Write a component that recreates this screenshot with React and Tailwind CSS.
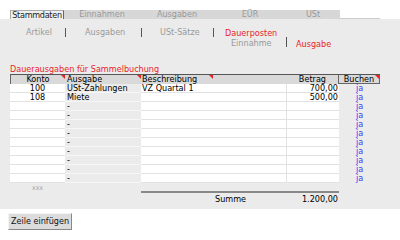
const rows = [
  { konto: "100", ausgabe: "USt-Zahlungen", beschr: "VZ Quartal 1", betrag: "700,00" },
  { konto: "108", ausgabe: "Miete", beschr: "", betrag: "500,00" },
  ...Array.from({ length: 9 }, () => ({ konto: "", ausgabe: "-", beschr: "", betrag: "" })),
];

const tabs = [
  { label: "Einnahmen", w: "w-[76px]" },
  { label: "Ausgaben", w: "w-[74px]" },
  { label: "EÜR", w: "w-[72px]" },
  { label: "USt", w: "w-[54px]" },
];

function Mark() {
  return (
    <span className="absolute top-0 right-0 w-0 h-0 border-t-[4px] border-t-[#e8232a] border-l-[4px] border-l-transparent" />
  );
}

function Sep({ className = "" }) {
  return <span className={`shrink-0 w-px h-[9px] bg-[#555] ${className}`} />;
}

export default function App() {
  return (
    <div
      className="w-[400px] h-[240px] bg-white text-[9px] leading-[9px] text-black overflow-hidden"
      style={{ fontFamily: '"DejaVu Sans Condensed", "DejaVu Sans", sans-serif' }}
    >
      <div className="h-[10px]" />

      {/* tabs */}
      <div className="flex h-[9px] pl-[10px]">
        <div className="shrink-0 w-[54px] bg-[#efefef] border-t border-l border-[#aaa] border-r-[#666] border-r text-[#222] text-center leading-[8px] tracking-[-0.3px]">
          Stammdaten
        </div>
        {tabs.map((t) => (
          <div key={t.label} className={`shrink-0 ${t.w} bg-[#d7d7d7] text-[#999] text-center leading-[9px]`}>
            {t.label}
          </div>
        ))}
        <div className="shrink-0 w-[40px] border-b border-[#ccc]" />
      </div>

      <div className="h-[190px] bg-[#ebebeb] pt-[9px]">
        {/* sub navigation */}
        <div className="flex items-start pl-[26px] text-[#999] h-[19px]">
          <div className="shrink-0 w-[39px]">Artikel</div>
          <Sep />
          <div className="shrink-0 ml-[19px] w-[56px]">Ausgaben</div>
          <Sep />
          <div className="shrink-0 ml-[18px] w-[53px]">USt-Sätze</div>
          <Sep />
          <div className="ml-[11px] flex flex-col">
            <div className="text-[#e8232a] h-[9px] pt-[1px]">Dauerposten</div>
            <div className="flex items-start">
              <div className="shrink-0 ml-[6px] w-[55px] pt-[2px]">Einnahme</div>
              <Sep className="h-[10px]" />
              <div className="ml-[9px] text-[#e8232a] pt-[3px]">Ausgabe</div>
            </div>
          </div>
        </div>

        {/* title */}
        <div className="mt-[18px] pl-[10px] text-[#e8232a] h-[9px]">Dauerausgaben für Sammelbuchung</div>

        {/* table */}
        <div className="ml-[10px] w-[370px]">
          <div className="flex h-[10px] border-t border-[#555] bg-[#d9d9d9] leading-[9px]">
            <div className="relative shrink-0 w-[55px] border-l border-[#666] text-center">
              Konto
              <Mark />
            </div>
            <div className="relative shrink-0 w-[76px] pl-[2px]">
              Ausgabe
              <Mark />
            </div>
            <div className="relative shrink-0 w-[145px] pl-[1px]">
              Beschreibung
              <span className="absolute top-0 left-[68px] w-0 h-0 border-t-[4px] border-t-[#e8232a] border-l-[4px] border-l-transparent" />
            </div>
            <div className="shrink-0 w-[53px] text-right pr-[12px] border-r border-[#666]">Betrag</div>
            <div className="relative shrink-0 w-[41px] text-center border-r border-b border-[#666]">
              Buchen
              <Mark />
            </div>
          </div>

          {rows.map((r, i) => (
            <div key={i} className="flex h-[9px] leading-[8px]">
              <div className="shrink-0 w-[55px] bg-white border-b border-[#e2e2e2] text-center">{r.konto}</div>
              <div className="shrink-0 w-[76px] border-b border-[#f6f6f6] pl-[2px]">{r.ausgabe}</div>
              <div className="shrink-0 w-[145px] bg-white border-b border-[#e2e2e2] pl-[1px]">{r.beschr}</div>
              <div className="shrink-0 w-[53px] bg-white border-b border-l border-[#e2e2e2] text-right pr-[1px]">{r.betrag}</div>
              <div className="shrink-0 w-[41px] pl-[17px] text-[#3b3bf0]">ja</div>
            </div>
          ))}

          <div className="flex h-[8px] pt-[2px]">
            <div className="shrink-0 w-[55px] text-center text-[#aaa] text-[7px] leading-[7px]">xxx</div>
          </div>
          <div className="flex">
            <div className="shrink-0 w-[131px]" />
            <div className="shrink-0 w-[198px] border-t-2 border-[#888] flex pt-[2px]">
              <div className="pl-[74px]">Summe</div>
              <div className="ml-auto pr-[1px]">1.200,00</div>
            </div>
          </div>
        </div>
      </div>

      <div className="pl-[8px] pt-[4px]">
        <button className="h-[17px] w-[64px] bg-[#dcdcdc] border border-t-[#f4f4f4] border-l-[#f4f4f4] border-r-[#888] border-b-[#888] text-[9px] leading-[9px] text-[#111]">
          Zeile einfügen
        </button>
      </div>
    </div>
  );
}
